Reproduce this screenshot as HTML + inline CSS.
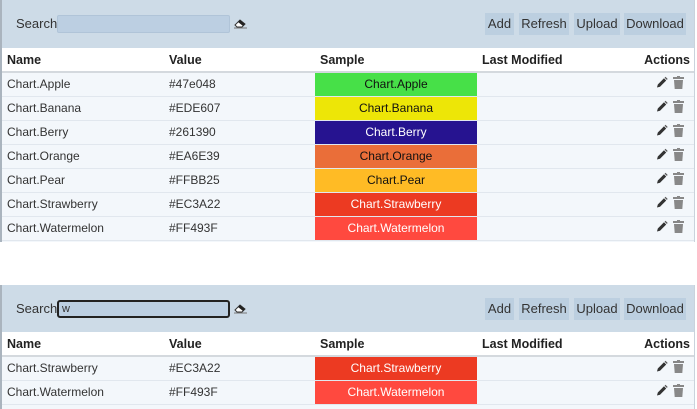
<!DOCTYPE html>
<html><head><style>
*{box-sizing:border-box;margin:0;padding:0}
body{width:697px;height:409px;background:#fff;font-family:"Liberation Sans",Arial,sans-serif;font-size:12px;color:#333;overflow:hidden;position:relative}
.panel{position:absolute;left:0;width:695px;border-left:2px solid #aab4be;border-right:1px solid #c9d3dc;background:#f3f7fb}
.bar{height:48px;background:#cddbe7;position:relative}
.lbl{position:absolute;left:14px;top:16px;font-size:13px;color:#333}
.inp{position:absolute;left:55px;top:15px;width:173px;height:18px;background:#bccfe2;border:1px solid #b0c4d8;border-radius:2px;font-size:11px;padding-left:3px;line-height:16px}
.inp.f{border:2px solid #222;border-radius:3px;line-height:14px}
.er{position:absolute;left:232px;top:17px}
.btn{position:absolute;top:13px;height:22px;background:#bccfe0;font-size:13px;line-height:22px;text-align:center;color:#333}
table{border-collapse:collapse;width:100%;table-layout:fixed}
th{height:24px;background:#fff;text-align:left;font-weight:bold;font-size:12.5px;border-bottom:2px solid #d4d9de;padding:0 5px;color:#222}
td{height:24px;border-bottom:1px solid #e1e7ee;padding:0 5px;white-space:nowrap}
td.s{text-align:center;padding:0}
.act{text-align:right;padding-right:8px}
</style></head><body>
<svg width="0" height="0" style="position:absolute"><defs>
<g id="p"><path d="M1 11.5 L1.8 8.5 L8 2.3 L10.2 4.5 L4 10.7 Z" fill="#333"/><path d="M8.6 1.7 L9.5 0.8 L11.7 3 L10.8 3.9Z" fill="#555"/></g>
<g id="t"><rect x="0" y="1" width="11" height="2" fill="#888"/><rect x="4" y="0" width="3" height="1.5" fill="#888"/><path d="M1 4 H10 L9.3 13 H1.7Z" fill="#888"/></g>
<g id="e"><path d="M1 8 L6 3 L11 7 L8 10 H3 Z" fill="#fff" stroke="#333" stroke-width="1"/><path d="M4 5 L6 3 L11 7 L9 9Z" fill="#222"/><path d="M0 11 H13" stroke="#777"/></g>
</defs></svg>

<div class="panel" style="top:0;height:242px">
<div class="bar"><span class="lbl">Search</span><div class="inp"></div><svg class="er" width="14" height="13"><use href="#e"/></svg>
<div class="btn" style="left:483px;width:29px">Add</div><div class="btn" style="left:517px;width:50px">Refresh</div><div class="btn" style="left:572px;width:46px">Upload</div><div class="btn" style="left:622px;width:62px">Download</div></div>
<table>
<colgroup><col style="width:162px"><col style="width:151px"><col style="width:162px"><col style="width:120px"><col></colgroup>
<tr><th>Name</th><th>Value</th><th>Sample</th><th>Last Modified</th><th style="text-align:right;padding-right:4px">Actions</th></tr>
<tr><td>Chart.Apple</td><td>#47e048</td><td class="s" style="background:#47e048;color:#111">Chart.Apple</td><td></td><td class="act"><svg width="30" height="13"><use href="#p"/><use href="#t" x="17"/></svg></td></tr>
<tr><td>Chart.Banana</td><td>#EDE607</td><td class="s" style="background:#EDE607;color:#111">Chart.Banana</td><td></td><td class="act"><svg width="30" height="13"><use href="#p"/><use href="#t" x="17"/></svg></td></tr>
<tr><td>Chart.Berry</td><td>#261390</td><td class="s" style="background:#261390;color:#fff">Chart.Berry</td><td></td><td class="act"><svg width="30" height="13"><use href="#p"/><use href="#t" x="17"/></svg></td></tr>
<tr><td>Chart.Orange</td><td>#EA6E39</td><td class="s" style="background:#EA6E39;color:#111">Chart.Orange</td><td></td><td class="act"><svg width="30" height="13"><use href="#p"/><use href="#t" x="17"/></svg></td></tr>
<tr><td>Chart.Pear</td><td>#FFBB25</td><td class="s" style="background:#FFBB25;color:#111">Chart.Pear</td><td></td><td class="act"><svg width="30" height="13"><use href="#p"/><use href="#t" x="17"/></svg></td></tr>
<tr><td>Chart.Strawberry</td><td>#EC3A22</td><td class="s" style="background:#EC3A22;color:#fff">Chart.Strawberry</td><td></td><td class="act"><svg width="30" height="13"><use href="#p"/><use href="#t" x="17"/></svg></td></tr>
<tr><td>Chart.Watermelon</td><td>#FF493F</td><td class="s" style="background:#FF493F;color:#fff">Chart.Watermelon</td><td></td><td class="act"><svg width="30" height="13"><use href="#p"/><use href="#t" x="17"/></svg></td></tr>
</table></div>

<div class="panel" style="top:285px;height:124px">
<div class="bar" style="height:47px"><span class="lbl">Search</span><div class="inp f">w</div><svg class="er" width="14" height="13"><use href="#e"/></svg>
<div class="btn" style="left:483px;width:29px">Add</div><div class="btn" style="left:517px;width:50px">Refresh</div><div class="btn" style="left:572px;width:46px">Upload</div><div class="btn" style="left:622px;width:62px">Download</div></div>
<table>
<colgroup><col style="width:162px"><col style="width:151px"><col style="width:162px"><col style="width:120px"><col></colgroup>
<tr><th>Name</th><th>Value</th><th>Sample</th><th>Last Modified</th><th style="text-align:right;padding-right:4px">Actions</th></tr>
<tr><td>Chart.Strawberry</td><td>#EC3A22</td><td class="s" style="background:#EC3A22;color:#fff">Chart.Strawberry</td><td></td><td class="act"><svg width="30" height="13"><use href="#p"/><use href="#t" x="17"/></svg></td></tr>
<tr><td>Chart.Watermelon</td><td>#FF493F</td><td class="s" style="background:#FF493F;color:#fff">Chart.Watermelon</td><td></td><td class="act"><svg width="30" height="13"><use href="#p"/><use href="#t" x="17"/></svg></td></tr>
</table></div>
</body></html>
